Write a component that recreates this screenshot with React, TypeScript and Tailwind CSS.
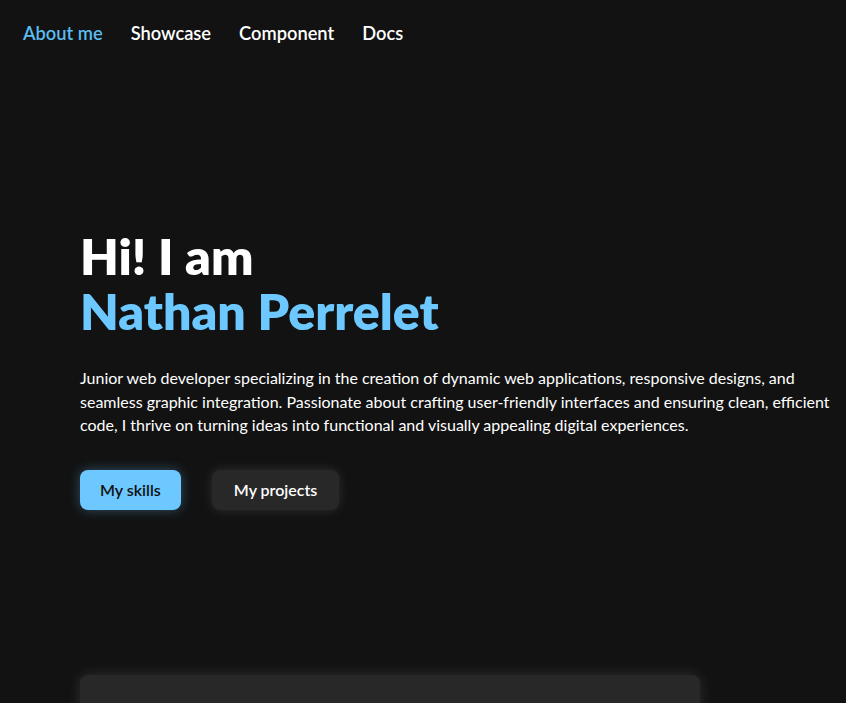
const links = ["About me", "Showcase", "Component", "Docs"];

const App = () => {
  return (
    <div
      className="min-h-[703px] bg-[#121212] text-white overflow-hidden"
      style={{ fontFamily: "Lato, 'Open Sans', sans-serif" }}
    >
      <nav className="flex items-center gap-7 px-[23px] pt-[21px]">
        {links.map((l, i) => (
          <a
            key={l}
            className={`text-[18.3px] font-semibold leading-6 ${
              i === 0 ? "text-[#5bbcf0]" : "text-white"
            }`}
          >
            {l}
          </a>
        ))}
      </nav>

      <section className="pl-20 pt-[184px]">
        <h1 className="text-[50px] font-extrabold leading-[55px]">
          Hi! I am
          <br />
          <span className="text-[#6cc8fe]">Nathan Perrelet</span>
        </h1>
        <p className="mt-[27px] w-[780px] whitespace-nowrap text-[16px] leading-[23.5px]">
          Junior web developer specializing in the creation of dynamic web
          applications, responsive designs, and
          <br />
          seamless graphic integration. Passionate about crafting user-friendly
          interfaces and ensuring clean, efficient
          <br />
          code, I thrive on turning ideas into functional and visually appealing
          digital experiences.
        </p>
        <div className="mt-[33px] flex gap-[31px]">
          <button className="h-10 rounded-lg bg-[#6cc8fe] px-5 text-[16px] font-semibold text-[#111] shadow-[0_0_12px_rgba(108,200,254,0.35)]">
            My skills
          </button>
          <button className="h-10 rounded-lg bg-[#282828] px-[22px] text-[16px] font-semibold text-white shadow-[0_0_12px_rgba(255,255,255,0.12)]">
            My projects
          </button>
        </div>
        <div className="mt-[165px] h-[200px] w-[620px] rounded-lg bg-[#282828] shadow-[0_0_14px_rgba(255,255,255,0.12)]" />
      </section>
    </div>
  );
};

export default App;
